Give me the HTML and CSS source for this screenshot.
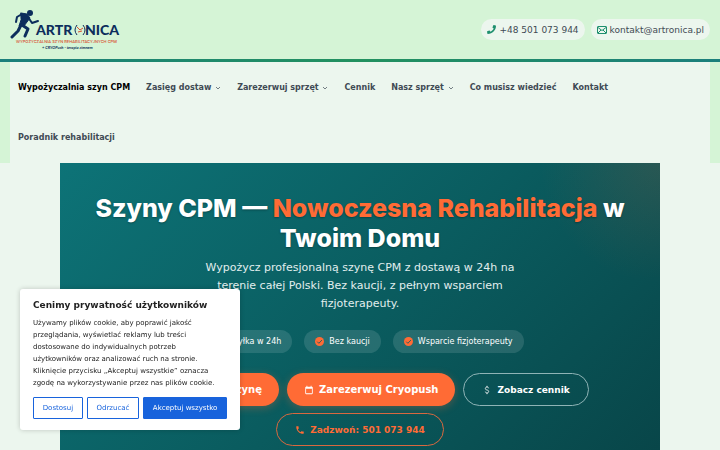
FILE: index.html
```
<!DOCTYPE html>
<html lang="pl">
<head>
<meta charset="UTF-8">
<title>Artronica - wypożyczalnia szyn CPM</title>
<meta name="viewport" content="width=device-width, initial-scale=1.0">
<link rel="stylesheet" href="styles.css">
</head>
<body>

<header class="site-header">
  <div class="topbar">
    <a class="logo" href="#" aria-label="Artronica">
      <svg width="110" height="42" viewBox="0 0 110 42">
        <g class="runner">
          <circle cx="20" cy="4" r="3"/>
          <path class="torso" d="M11 4 L17 5 L20 9 L17 13 L14 17 L9 17 L11 11 Z"/>
          <path d="M12 5 L7 8 L6 13"/>
          <path d="M18 8 L22 14 L28 12"/>
          <path class="leg" d="M12 16 L18 20 L15 27"/>
          <path class="leg" d="M11 16 L8 22 L2 28"/>
        </g>
        <text class="logo-name" x="26" y="26">ARTR</text>
        <text class="logo-name" x="75" y="26">NICA</text>
        <g class="logo-joint">
          <path d="M67 16 Q63 21 67 26 M73 16 Q77 21 73 26"/>
          <path class="joint-red" d="M67 18 L70 21 L73 19 M68 23 L72 22"/>
        </g>
        <text class="logo-tag" x="6" y="34">WYPOŻYCZALNIA SZYN REHABILITACYJNYCH CPM</text>
        <text class="logo-sub" x="32" y="40">+ CRYOPush - terapia zimnem</text>
      </svg>
    </a>
    <div class="contact">
      <a class="contact-pill" href="tel:+48501073944">
        <svg width="9" height="9" viewBox="0 0 512 512"><path fill="currentColor" d="M493 25 389 1c-11-3-23 3-27 14l-48 112c-4 10-1 21 7 28l61 50c-36 77-99 140-177 177l-50-61c-7-8-18-11-28-7L15 362c-11 4-17 16-14 27l24 104c3 11 12 19 24 19 256 0 463-207 463-463 0-12-8-21-19-24z"/></svg>
        +48 501 073 944
      </a>
      <a class="contact-pill" href="mailto:kontakt@artronica.pl">
        <svg width="10" height="10" viewBox="0 0 20 16" fill="none" stroke="currentColor" stroke-width="2"><rect x="1" y="1" width="18" height="14" rx="1"/><path d="M2 3l8 6 8-6M2 14l6-6M18 14l-6-6"/></svg>
        kontakt@artronica.pl
      </a>
    </div>
  </div>
  <div class="nav-wrap">
    <nav class="main-nav">
      <a class="active" href="#">Wypożyczalnia szyn CPM</a>
      <a href="#">Zasięg dostaw <svg class="chevron" viewBox="0 0 6 4"><path d="M1 1l2 2 2-2"/></svg></a>
      <a href="#">Zarezerwuj sprzęt <svg class="chevron" viewBox="0 0 6 4"><path d="M1 1l2 2 2-2"/></svg></a>
      <a href="#">Cennik</a>
      <a href="#">Nasz sprzęt <svg class="chevron" viewBox="0 0 6 4"><path d="M1 1l2 2 2-2"/></svg></a>
      <a href="#">Co musisz wiedzieć</a>
      <a href="#">Kontakt</a>
      <a href="#">Poradnik rehabilitacji</a>
    </nav>
  </div>
</header>

<main class="hero">
  <h1>Szyny CPM — <span class="accent">Nowoczesna Rehabilitacja</span> w Twoim Domu</h1>
  <p class="lead">Wypożycz profesjonalną szynę CPM z dostawą w 24h na terenie całej Polski. Bez kaucji, z pełnym wsparciem fizjoterapeuty.</p>
  <ul class="badges">
    <li><svg class="check" viewBox="0 0 10 10"><circle cx="5" cy="5" r="5"/><path d="M2.5 5.2l1.8 1.8 3.4-3.6"/></svg>Wysyłka w 24h</li>
    <li><svg class="check" viewBox="0 0 10 10"><circle cx="5" cy="5" r="5"/><path d="M2.5 5.2l1.8 1.8 3.4-3.6"/></svg>Bez kaucji</li>
    <li><svg class="check" viewBox="0 0 10 10"><circle cx="5" cy="5" r="5"/><path d="M2.5 5.2l1.8 1.8 3.4-3.6"/></svg>Wsparcie fizjoterapeuty</li>
  </ul>
  <div class="actions">
    <a class="btn btn-solid" href="#"><svg class="icon" viewBox="0 0 24 24"><path fill="currentColor" d="M19 4h-1V2h-2v2H8V2H6v2H5a2 2 0 0 0-2 2v14a2 2 0 0 0 2 2h14a2 2 0 0 0 2-2V6a2 2 0 0 0-2-2zm0 16H5V9h14v11z"/></svg>Zarezerwuj szynę</a>
    <a class="btn btn-solid" href="#"><svg class="icon" viewBox="0 0 24 24"><path fill="currentColor" d="M19 4h-1V2h-2v2H8V2H6v2H5a2 2 0 0 0-2 2v14a2 2 0 0 0 2 2h14a2 2 0 0 0 2-2V6a2 2 0 0 0-2-2zm0 16H5V9h14v11z"/></svg>Zarezerwuj Cryopush</a>
    <a class="btn btn-light" href="#"><svg class="icon" viewBox="0 0 24 24"><path fill="none" stroke="currentColor" stroke-width="2" d="M16 8c0-2-2-3-4-3s-4 1-4 3.500 2 3 4 3.500 4 1 4 3.500-2 3.500-4 3.500-4-1-4-3M12 2v3M12 19v3"/></svg>Zobacz cennik</a>
    <a class="btn btn-outline" href="tel:501073944"><svg class="icon" viewBox="0 0 24 24"><path fill="currentColor" d="M6.600 10.800c1.400 2.800 3.800 5.100 6.600 6.600l2.200-2.200c.3-.3.700-.4 1-.2 1.100.4 2.300.6 3.600.6.600 0 1 .4 1 1V20c0 .6-.4 1-1 1C10.600 21 3 13.400 3 4c0-.6.400-1 1-1h3.500c.6 0 1 .4 1 1 0 1.300.2 2.500.6 3.600.1.300 0 .7-.2 1z"/></svg>Zadzwoń: 501 073 944</a>
  </div>
</main>

<section class="cookie" aria-labelledby="cookie-title">
  <h2 id="cookie-title">Cenimy prywatność użytkowników</h2>
  <p>Używamy plików cookie, aby poprawić jakość przeglądania, wyświetlać reklamy lub treści dostosowane do indywidualnych potrzeb użytkowników oraz analizować ruch na stronie. Kliknięcie przycisku „Akceptuj wszystkie” oznacza zgodę na wykorzystywanie przez nas plików cookie.</p>
  <div class="cookie-buttons">
    <button type="button">Dostosuj</button>
    <button type="button">Odrzucać</button>
    <button type="button" class="accept">Akceptuj wszystko</button>
  </div>
</section>

</body>
</html>
```
FILE: styles.css
```
* {
  box-sizing: border-box;
}
body {
  margin: 0;
  font-family: "DejaVu Sans", sans-serif;
  background: #ecf6ee;
  color: #3f4a54;
}
a {
  color: inherit;
  text-decoration: none;
}

/* header */
.site-header {
  background: #d5f4d6;
}
.topbar {
  display: flex;
  justify-content: space-between;
  align-items: center;
  height: 62px;
  padding: 0 10px;
  border-bottom: 3px solid;
  border-image: linear-gradient(90deg, #1b7f7c, #22915f, #1b7f7c) 1;
}
.logo svg {
  display: block;
}
.runner {
  fill: #0c2d5c;
}
.runner path {
  fill: none;
  stroke: #0c2d5c;
  stroke-width: 2;
  stroke-linecap: round;
  stroke-linejoin: round;
}
.runner .torso {
  fill: #0c2d5c;
  stroke-width: 1;
}
.runner .leg {
  stroke-width: 3;
}
.logo-name {
  font: 900 14px Lato, sans-serif;
  fill: #0c2d5c;
}
.logo-joint path {
  fill: none;
  stroke: #0c2d5c;
}
.logo-joint .joint-red {
  stroke: #d8502f;
}
.logo-tag {
  font: 500 4px Inter, sans-serif;
  fill: #d8502f;
}
.logo-sub {
  font: italic 700 4px Lato, sans-serif;
  fill: #0c2d5c;
}
.contact {
  display: flex;
  gap: 6px;
}
.contact-pill {
  display: flex;
  align-items: center;
  gap: 3px;
  height: 21px;
  padding: 0 6px;
  border-radius: 11px;
  background: #ecf6ee;
  font-size: 9px;
}
.contact-pill svg {
  color: #1e8f6e;
}

/* menu */
.nav-wrap {
  padding: 0 10px;
}
.main-nav {
  display: flex;
  flex-wrap: wrap;
  padding-top: 1px;
  background: #ecf6ee;
}
.main-nav a {
  padding: 0 8px;
  font-size: 8px;
  font-weight: bold;
  line-height: 50px;
}
.main-nav .active {
  color: #000;
}
.chevron {
  width: 6px;
  height: 4px;
  margin-left: 1px;
  fill: none;
  stroke: currentColor;
  stroke-width: 0.7;
  vertical-align: middle;
}

/* hero */
.hero {
  max-width: 600px;
  margin: 0 auto;
  padding: 30px 30px 40px;
  background:
    radial-gradient(circle at 100% 0, rgba(255, 107, 53, 0.13), transparent 120px),
    linear-gradient(135deg, #0d7377 0%, #0a5c5f 50%, #084447 100%);
  color: #fff;
  text-align: center;
}
.hero h1 {
  margin: 0 0 6px;
  font: 800 25px/30px Inter, sans-serif;
  text-shadow: 0 1px 2px rgba(0, 0, 0, 0.3);
}
.accent {
  color: #ff6b35;
}
.lead {
  max-width: 350px;
  margin: 0 auto 17px;
  font-size: 11px;
  line-height: 18px;
  color: #e1eeee;
}
.badges {
  display: flex;
  justify-content: center;
  gap: 12px;
  margin: 0 0 20px;
  padding: 0;
  list-style: none;
}
.badges li {
  display: flex;
  align-items: center;
  gap: 5px;
  height: 23px;
  padding: 0 11px;
  border-radius: 12px;
  background: rgba(255, 255, 255, 0.12);
  font-size: 8px;
  white-space: nowrap;
}
.check {
  width: 9px;
  height: 9px;
  fill: #ff6b35;
}
.check path {
  fill: none;
  stroke: #1d5e60;
}
.actions {
  display: flex;
  flex-wrap: wrap;
  justify-content: center;
  gap: 7px 8px;
}
.btn {
  display: flex;
  align-items: center;
  gap: 5px;
  height: 33px;
  padding: 0 18px;
  border-radius: 17px;
  font-size: 9px;
  font-weight: bold;
}
.icon {
  width: 10px;
  height: 10px;
}
.btn-solid {
  padding: 0 17px;
  background: #ff6b35;
  box-shadow: 0 2px 8px rgba(255, 107, 53, 0.3);
  font-size: 10px;
}
.btn-light {
  border: 1px solid #8fb4b6;
}
.btn-outline {
  border: 1px solid #d9683f;
  color: #ff6b35;
}

/* cookie notice */
.cookie {
  position: fixed;
  left: 20px;
  bottom: 20px;
  width: 220px;
  padding: 10px 13px 11px;
  border-radius: 3px;
  background: #fff;
  box-shadow: 0 0 5px rgba(0, 0, 0, 0.2);
  color: #212121;
}
.cookie h2 {
  margin: 0 0 6px;
  font-size: 9px;
  line-height: 12px;
}
.cookie p {
  margin: 0 0 8px;
  font-size: 7px;
  line-height: 12px;
}
.cookie-buttons {
  display: flex;
  gap: 4px;
}
.cookie button {
  flex: 1 1 auto;
  height: 22px;
  padding: 0 6px;
  border: 1px solid #1863dc;
  border-radius: 1px;
  background: none;
  color: #1863dc;
  font: 7px "DejaVu Sans", sans-serif;
  white-space: nowrap;
}
.cookie .accept {
  background: #1863dc;
  color: #fff;
}
```
